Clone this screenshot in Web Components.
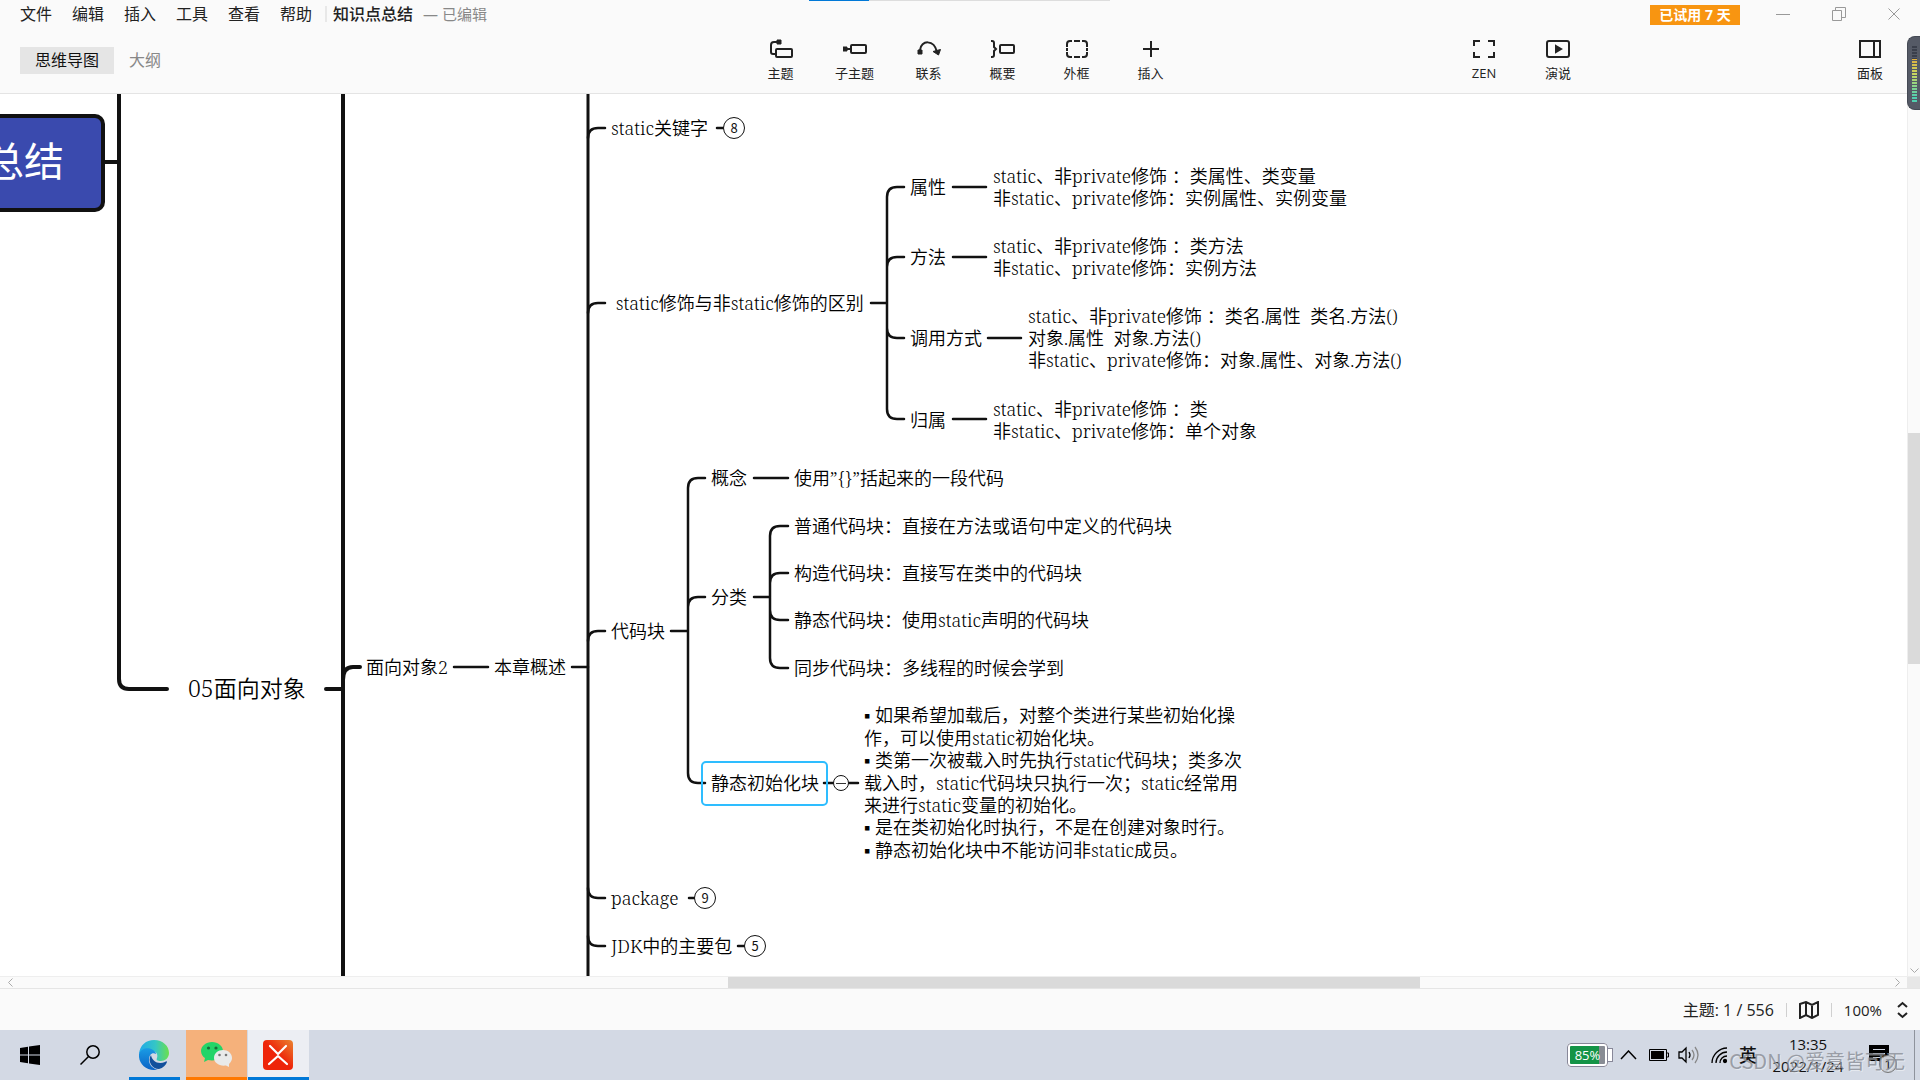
<!DOCTYPE html>
<html lang="zh-CN">
<head>
<meta charset="utf-8">
<title>知识点总结</title>
<style>
html,body{margin:0;height:100%;background:#fafafa}
body{font-family:"Open Sans","Noto Sans CJK SC",sans-serif;color:#222;overflow:hidden}
</style>
</head>
<body>
<mind-app></mind-app>
<script>
const RESET = `
*{box-sizing:border-box}
button{font:inherit;color:inherit;background:none;border:0;margin:0;padding:0}
svg{display:block}
`;
function define(name, css, html) {
  const t = document.createElement('template');
  t.innerHTML = `<style>${RESET}${css}</style>${html}`;
  customElements.define(name, class extends HTMLElement {
    constructor() {
      super();
      this.attachShadow({mode: 'open'}).appendChild(t.content.cloneNode(true));
    }
  });
}

/* Title bar: menus, document name, trial badge, window buttons */
define('title-bar', `
:host{display:flex;align-items:center;height:28px;padding:0 20px;font-size:16px;line-height:24px}
nav{display:flex;gap:20px}
.doc{display:flex;align-items:center;margin-left:13px;padding-left:6px;border-left:2px solid #e8e8e8;height:16px}
h1{margin:0;font-size:16px;font-weight:500;line-height:24px}
.state{margin-left:10px;font-size:15px;color:#888}
.win{display:flex;align-items:center;margin-left:auto;gap:42px;color:#999}
.trial{background:#f89511;color:#fff;font-size:14px;font-weight:700;line-height:20px;width:90px;margin-right:-6px;margin-top:2px}
`, `
<nav aria-label="菜单"><button>文件</button><button>编辑</button><button>插入</button><button>工具</button><button>查看</button><button>帮助</button></nav>
<div class="doc"><h1>知识点总结</h1><span class="state">— 已编辑</span></div>
<div class="win"><button class="trial">已试用 7 天</button>
<button aria-label="最小化"><svg width="14" height="14"><path d="M0 7.500H14" stroke="currentColor"/></svg></button>
<button aria-label="还原"><svg width="14" height="14" fill="none" stroke="currentColor"><path d="M.5 3.500h9v10h-9zM3.500 3.500v-3h10v10h-4"/></svg></button>
<button aria-label="关闭"><svg width="12" height="12"><path d="M.5.5l11 11M11.500.5l-11 11" stroke="currentColor"/></svg></button></div>
`);

define('tool-button', `
:host{display:block}
button{display:flex;flex-direction:column;align-items:center;gap:4px;width:74px;font-size:13px;line-height:20px;color:#222}
::slotted(svg){display:block;width:24px;height:20px;fill:none;stroke:#222;stroke-width:2}
`, `<button><slot name="icon"></slot><slot></slot></button>`);

define('tool-bar', `
:host{display:grid;grid-template-columns:1fr auto 1fr;align-items:start;height:65px;padding:11px 13px 0 20px}
.tabs{display:flex;margin-top:8px;font-size:16px;line-height:27px}
.tabs button{padding:0 15px;color:#888}
.tabs button[aria-selected=true]{background:#e5e5e5;color:#111}
.group{display:flex}
.tools{padding-left:4px}
.right{justify-content:flex-end}
.panel{margin-left:238px}
`, `
<div class="tabs" role="tablist"><button role="tab" aria-selected="true">思维导图</button><button role="tab" aria-selected="false">大纲</button></div>
<div class="group tools">
<tool-button><svg slot="icon" viewBox="0 0 24 20"><path d="M8 3H5q-3 0-3 3v7q0 2 2 2h2"/><rect x="7" y="10" width="16" height="8" rx="1"/><path d="M8 1h4v4H8z" fill="#222" stroke-width="1"/></svg>主题</tool-button>
<tool-button><svg slot="icon" viewBox="0 0 24 20"><path d="M3 10h5"/><rect x="8" y="6" width="15" height="8" rx="1"/><path d="M0 8h4v4H0z" fill="#222" stroke-width="1"/></svg>子主题</tool-button>
<tool-button><svg slot="icon" viewBox="0 0 24 20"><path d="M3 11C4 1 17 0 20 13"/><path d="M1 11h4v4H1z" fill="#222" stroke-width="1"/><path d="M16 12.500l7.500-2-2 5.500z" fill="#222" stroke-width="1"/></svg>联系</tool-button>
<tool-button><svg slot="icon" viewBox="0 0 24 20"><path d="M0 2h1q2 0 2 2v4l2 2-2 2v4q0 2-2 2H0"/><rect x="9" y="6" width="14" height="8" rx="1"/></svg>概要</tool-button>
<tool-button><svg slot="icon" viewBox="0 0 24 20"><path d="M2 8V5q0-3 3-3h2M9 2h6M17 2h2q3 0 3 3v3M22 9v3M22 13v2q0 3-3 3h-2M15 18H9M7 18H5q-3 0-3-3v-2M2 12V9"/></svg>外框</tool-button>
<tool-button><svg slot="icon" viewBox="0 0 24 20"><path d="M12 2v16M4 10h16"/></svg>插入</tool-button>
</div>
<div class="group right">
<tool-button><svg slot="icon" viewBox="0 0 24 20"><path d="M2 7V2h6M16 2h6v5M22 13v5h-6M8 18H2v-5"/></svg>ZEN</tool-button>
<tool-button><svg slot="icon" viewBox="0 0 24 20"><rect x="1" y="2" width="22" height="16" rx="2"/><path d="M10 7l5 3-5 3z" fill="#222"/></svg>演说</tool-button>
<tool-button class="panel"><svg slot="icon" viewBox="0 0 24 20"><path d="M2 2h20v16H2zM16 2v16"/></svg>面板</tool-button>
</div>
`);

/* A topic, placed by its left edge and vertical centre on the free canvas */
customElements.define('mind-node', class extends HTMLElement {
  constructor() {
    super();
    this.attachShadow({mode: 'open'}).innerHTML = `<style>
:host{position:absolute;display:block;transform:translateY(-50%);white-space:pre;font-size:18px;line-height:22px}
:host([level="1"]){font-size:23px;line-height:30px}
:host([level="0"]){font:400 40px/50px "Noto Sans CJK SC",sans-serif;color:#fff}
</style><slot></slot>`;
  }
  connectedCallback() {
    this.style.left = this.getAttribute('x') + 'px';
    this.style.top = this.getAttribute('y') + 'px';
  }
});

/* Round fold marker with a hidden-topic count */
customElements.define('fold-mark', class extends HTMLElement {
  constructor() {
    super();
    this.attachShadow({mode: 'open'}).innerHTML = `<style>
:host{position:absolute;display:block;transform:translate(-50%,-50%)}
button{box-sizing:border-box;display:grid;place-items:center;width:22px;height:22px;padding:0;border:1px solid #111;border-radius:50%;background:#fff;color:#111;font:13px/20px "Noto Sans CJK SC",sans-serif}
:host([open]) button{width:16px;height:16px}
:host([open]) button::before{content:"";width:10px;height:1px;background:#333}
</style><button><slot></slot></button>`;
  }
  connectedCallback() {
    this.style.left = this.getAttribute('x') + 'px';
    this.style.top = this.getAttribute('y') + 'px';
  }
});

define('mind-map', `
:host{display:block;position:relative;flex:1;overflow:hidden;background:#fff;font-family:"Noto Serif","Noto Sans CJK SC",serif;font-weight:350;color:#000}
.world{position:absolute;left:0;top:-94px;width:100%;height:1080px}
.world>svg{position:absolute;left:0;top:0;width:100%;height:100%;fill:none;stroke:#111;stroke-linecap:round}
`, `
<div class="world">
<svg>
<rect x="-40" y="116" width="143" height="94" rx="8" fill="#3a4aae" stroke-width="4"/>
<g stroke-width="4"><path d="M105 162H119M119 90V679Q119 689 129 689H167M326 689H343M343 90V980M343 680Q343 667 353 667H360"/></g>
<g stroke-width="3"><path d="M588 90V980"/></g>
<g stroke-width="2.500">
<path d="M454 667H488M572 667H588"/>
<path d="M588 138Q588 128 598 128H605M588 313Q588 303 598 303H605M588 641Q588 631 598 631H605M588 888Q588 898 598 898H605M588 936Q588 946 598 946H605"/>
<path d="M717 128H724M689 898H695M738 946H745"/>
<path d="M871 303H887M904 187H897Q887 187 887 197V409Q887 419 897 419H904M887 267Q887 257 897 257H904M887 328Q887 338 897 338H904"/>
<path d="M953 187H986M953 257H986M988 338H1021M953 419H986"/>
<path d="M671 631H688M705 478H698Q688 478 688 488V773Q688 783 698 783H705M688 607Q688 597 698 597H705"/>
<path d="M754 478H788M754 597H770M788 526H780Q770 526 770 536V658Q770 668 780 668H788M770 583Q770 573 780 573H788M770 610Q770 620 780 620H788"/>
<path d="M824 783H833M849 783H858"/>
</g>
<rect x="702" y="762" width="125" height="43" rx="4" stroke="#2ebdff" stroke-width="2"/>
</svg>
<slot></slot>
</div>
`);

define('scroll-bar', `
:host{display:flex;align-items:center;background:#fafafa;color:#aaa}
:host([dir-x]){height:13px;border-top:1px solid #eee;border-bottom:1px solid #e5e5e5;padding-left:8px}
:host([dir-y]){flex-direction:column;width:13px;border-left:1px solid #eee}
i{background:#dadada;align-self:stretch}
:host([dir-x]) i{flex:691}
:host([dir-x]) .a{flex:715}
:host([dir-x]) .b{flex:475}
:host([dir-x]) svg{width:5px;height:9px}
:host([dir-y]) svg{width:9px;height:5px;margin-bottom:3px}
:host([dir-y]) i{flex:230}
:host([dir-y]) .a{flex:339}
:host([dir-y]) .b{flex:304}
:host([dir-x]) .dn,:host([dir-y]) .up,:host([dir-y]) .rt{display:none}
svg{fill:none;stroke:currentColor;stroke-width:1}
.rt{margin-right:7px}
.c{width:13px;align-self:stretch;background:#e7e7e7}
:host([dir-y]) .c{display:none}
`, `
<svg class="up" viewBox="0 0 5 9"><path d="M4.500.5l-4 4 4 4"/></svg>
<span class="a"></span><i></i><span class="b"></span>
<svg class="rt" viewBox="0 0 5 9"><path d="M.5.5l4 4-4 4"/></svg>
<svg class="dn" viewBox="0 0 9 5"><path d="M.5.5l4 4 4-4"/></svg>
<span class="c"></span>
`);

define('status-bar', `
:host{display:flex;align-items:center;justify-content:flex-end;height:41px;padding-right:11px;font-size:15px;line-height:24px;color:#222}
.count{font-size:16px}
.sep{width:1px;height:14px;background:#d0d0d0;margin:0 12px}
svg{fill:none;stroke:#222;stroke-width:2}
.step{margin-left:14px}
`, `
<span class="count">主题: 1 / 556</span><span class="sep"></span>
<button aria-label="地图"><svg width="20" height="18"><path d="M1 3l6-2 6 3 6-3v13l-6 3-6-3-6 3zM7 1v13M13 4v13"/></svg></button>
<span class="sep"></span><button>100%</button>
<button class="step" aria-label="缩放"><svg width="13" height="18"><path d="M2 6l4.500-4L11 6M2 12l4.500 4L11 12"/></svg></button>
`);

define('task-bar', `
:host{display:flex;position:relative;height:50px;background:#d3d9e4;color:#111;font-size:15px;line-height:22px}
.apps{display:flex;padding-left:5px}
.apps button{display:grid;place-items:center;height:50px;width:61px;border-bottom:3px solid transparent;padding-top:3px}
.apps .plain{width:49px;border-bottom-width:0;padding-top:0;margin-right:11px}
.apps .edge{width:51px;margin-left:4px;margin-right:6px;padding-right:2px;border-color:#0078d7}
.apps .chat{background:#f5b17b;border-color:#ff7800;margin-right:1px}
.apps .mind{background:#eceef3;padding-right:2px;border-color:#0078d7}
.tray{display:flex;align-items:center;margin-left:auto;height:50px}
.charge{display:flex;align-items:center;margin-right:7px}
.charge b{width:41px;height:24px;border:3px solid #fff;outline:1px solid #889;outline-offset:-1px;border-radius:4px;background:linear-gradient(90deg,#149447 82%,#888c94 82%);color:#fff;font-size:13px;font-weight:400;line-height:18px;text-align:center}
.charge::after{content:"";width:4px;height:12px;background:#fff;border:1px solid #889;border-left:0}
.ime{font-size:18px;font-weight:500;margin:0 14px 0 11px}
.clock{display:flex;flex-direction:column;align-items:center;width:74px;margin-right:24px;line-height:22px;white-space:nowrap}
.note{position:relative;margin-right:25px}
.badge{position:absolute;left:10px;top:10px;width:18px;height:18px;border-radius:50%;border:1px solid #777;background:#c8ccd4;font-size:13px;line-height:16px;text-align:center}
.desk{height:50px;width:6px;border-left:1px solid #8e939c}
.mark{position:absolute;right:15px;bottom:4px;font:20px/30px "Noto Sans CJK SC",sans-serif;color:#8b8f97;opacity:.8;text-shadow:1px 1px 0 #fff8;white-space:nowrap;pointer-events:none}
`, `
<div class="apps">
<button class="plain" aria-label="开始"><svg width="20" height="20"><path d="M0 3l8-1.200V9.500H0zM9 1.600L20 0v9.500H9zM0 10.500h8v7.700L0 17zM9 10.500h11V20L9 18.400z" fill="#000"/></svg></button>
<button class="plain" aria-label="搜索"><svg width="20" height="20" fill="none" stroke="#000" stroke-width="1.500"><circle cx="13" cy="7" r="6.200"/><path d="M8.500 11.500L.5 19.500"/></svg></button>
<button class="edge" aria-label="Edge"><svg width="30" height="30" viewBox="0 0 30 30"><defs><linearGradient id="g" x1="0" x2="1"><stop offset="0" stop-color="#1fa9e8"/><stop offset=".55" stop-color="#35c6c6"/><stop offset="1" stop-color="#6be04c"/></linearGradient><linearGradient id="h" x2="0" y2="1"><stop stop-color="#1a9be4"/><stop offset="1" stop-color="#0b63c6"/></linearGradient></defs>
<path d="M0 14C1 5 7 0 15 0c9 0 15 6 15 13 0 5-4 8-8 8-4 0-5-1-4-3 1-3 0-6-4-7C8 9 2 10 0 14z" fill="url(#g)"/><path d="M0 14c2-6 10-7 14-4 2 1 3 3 3 4-4-2-7 1-7 6 0 5 4 9 9 9.500C8 32-1 24 0 14z" fill="url(#h)"/><path d="M12 15c-4 6 1 14 8 14 4-1 7-4 8-7 0-1-1-1-2 0-7 3-13-1-14-7z" fill="#12509c"/></svg></button>
<button class="chat" aria-label="微信"><svg width="32" height="26" viewBox="0 0 32 26"><path d="M11 0C5 0 0 4 0 9c0 3 2 6 4 7l-1 4 4-2c9 2 15-3 15-9 0-5-5-9-11-9z" fill="#23d468"/><path d="M22 8c5 0 9 3.500 9 8 0 2-1 4-3 6v3l-3-1.500c-7 1-12-3-12-7.500s4-8 9-8z" fill="#e9eaea"/><g fill="#176d3a"><circle cx="7.500" cy="6" r="1.600"/><circle cx="15" cy="6" r="1.600"/></g><g fill="#777"><circle cx="18.500" cy="13" r="1.300"/><circle cx="25" cy="13" r="1.300"/></g></svg></button>
<button class="mind" aria-label="XMind"><svg width="30" height="30"><defs><linearGradient id="x" x1="0" y1="1" x2="1" y2="0"><stop offset=".5" stop-color="#ee2409"/><stop offset="1" stop-color="#e98430"/></linearGradient></defs><rect width="30" height="30" rx="4" fill="url(#x)"/><path d="M7 6l8 8 8-8M6 24l9-8 9 8" fill="none" stroke="#fff" stroke-width="2.200" stroke-linecap="round" stroke-linejoin="round"/></svg></button>
</div>
<div class="tray">
<div class="charge"><b>85%</b></div>
<button aria-label="更多"><svg width="17" height="10" fill="none" stroke="#000" stroke-width="1.500"><path d="M1 9l7.500-8L16 9"/></svg></button>
<svg width="20" height="12" style="margin-left:12px"><path d="M.5.5h17v11H.5zM18 4h1.500v4H18" fill="none" stroke="#000"/><path d="M2 2h13v8H2z"/></svg>
<svg width="22" height="18" style="margin-left:9px" fill="none" stroke="#000" stroke-width="1.300"><path d="M1 6h3l4-4v14l-4-4H1z"/><path d="M11 6q2 3 0 6"/><path d="M14 4q4 5 0 10M17 1q6 8 0 16" stroke="#888"/></svg>
<svg width="17" height="17" style="margin-left:11px" fill="none" stroke="#000" stroke-width="1.300"><path d="M1 16C1 8 8 1 16 1M5 16C5 10 10 5 16 5M9 16c0-4 3-7 7-7"/><circle cx="14" cy="14" r="1.500" fill="#000"/></svg>
<span class="ime">英</span>
<div class="clock"><span>13:35</span><span>2022/1/24</span></div>
<button class="note" aria-label="通知"><svg width="20" height="20"><path d="M0 0h20v16h-6v4l-4-4H0z"/><path d="M4 4.500h12M4 8.500h12M4 12.500h7" stroke="#d3d9e4"/></svg><span class="badge">1</span></button>
<span class="desk"></span>
</div>
<span class="mark">CSDN @爱意皆可无</span>
`);

define('level-meter', `
:host{position:absolute;right:0;top:36px;display:block;width:13px;height:74px;border-radius:8px 0 0 8px;background:#555a66;border:1px solid #444954;border-right:0}
div{margin:8px 3px 0 4px;height:58px;background:repeating-linear-gradient(#555a66 0 1px,transparent 1px 3px),linear-gradient(#3a3f4b 0 25%,#e0b040 25%,#c8d860 50%,#50d0b0 90%)}
`, `<div></div>`);

define('top-progress', `
:host{position:absolute;top:0;left:809px;display:block;width:301px;height:1px;background:linear-gradient(90deg,#0078d7 60px,#ddd 60px)}
`, ``);

define('mind-app', `
:host{display:flex;flex-direction:column;position:relative;height:100vh;min-height:600px}
header{border-bottom:1px solid #e4e4e4}
main{display:flex;flex:1;min-height:0}
.dot{font-family:"Liberation Serif",serif}
`, `
<header><title-bar></title-bar><tool-bar></tool-bar></header>
<main>
<mind-map>
<mind-node level="0" x="-16" y="159">总结</mind-node>
<mind-node level="1" x="188" y="688">05面向对象</mind-node>
<mind-node x="366" y="667">面向对象2</mind-node>
<mind-node x="494" y="667">本章概述</mind-node>
<mind-node x="611" y="128">static关键字</mind-node>
<fold-mark x="734" y="128">8</fold-mark>
<mind-node x="611" y="303"> static修饰与非static修饰的区别</mind-node>
<mind-node x="910" y="187">属性</mind-node>
<mind-node x="993" y="187">static、非private修饰 ：类属性、类变量
非static、private修饰：实例属性、实例变量</mind-node>
<mind-node x="910" y="257">方法</mind-node>
<mind-node x="993" y="257">static、非private修饰 ：类方法
非static、private修饰：实例方法</mind-node>
<mind-node x="910" y="338">调用方式</mind-node>
<mind-node x="1028" y="338">static、非private修饰 ：类名.属性  类名.方法()
对象.属性  对象.方法()
非static、private修饰：对象.属性、对象.方法()</mind-node>
<mind-node x="910" y="420">归属</mind-node>
<mind-node x="993" y="420">static、非private修饰 ：类
非static、private修饰：单个对象</mind-node>
<mind-node x="611" y="631">代码块</mind-node>
<mind-node x="711" y="478">概念</mind-node>
<mind-node x="794" y="478">使用”{}”括起来的一段代码</mind-node>
<mind-node x="711" y="597">分类</mind-node>
<mind-node x="794" y="526">普通代码块：直接在方法或语句中定义的代码块</mind-node>
<mind-node x="794" y="573">构造代码块：直接写在类中的代码块</mind-node>
<mind-node x="794" y="620">静态代码块：使用static声明的代码块</mind-node>
<mind-node x="794" y="668">同步代码块：多线程的时候会学到</mind-node>
<mind-node x="711" y="783">静态初始化块</mind-node>
<fold-mark open x="841" y="783"></fold-mark>
<mind-node x="864" y="783"><span class="dot">▪</span> 如果希望加载后，对整个类进行某些初始化操
作，可以使用static初始化块。
<span class="dot">▪</span> 类第一次被载入时先执行static代码块；类多次
载入时，static代码块只执行一次；static经常用
来进行static变量的初始化。
<span class="dot">▪</span> 是在类初始化时执行，不是在创建对象时行。
<span class="dot">▪</span> 静态初始化块中不能访问非static成员。</mind-node>
<mind-node x="611" y="898">package</mind-node>
<fold-mark x="705" y="898">9</fold-mark>
<mind-node x="611" y="946">JDK中的主要包</mind-node>
<fold-mark x="755" y="946">5</fold-mark>
</mind-map>
<scroll-bar dir-y></scroll-bar>
</main>
<scroll-bar dir-x></scroll-bar>
<status-bar></status-bar>
<task-bar></task-bar>
<top-progress></top-progress>
<level-meter></level-meter>
`);
</script>
</body>
</html>
